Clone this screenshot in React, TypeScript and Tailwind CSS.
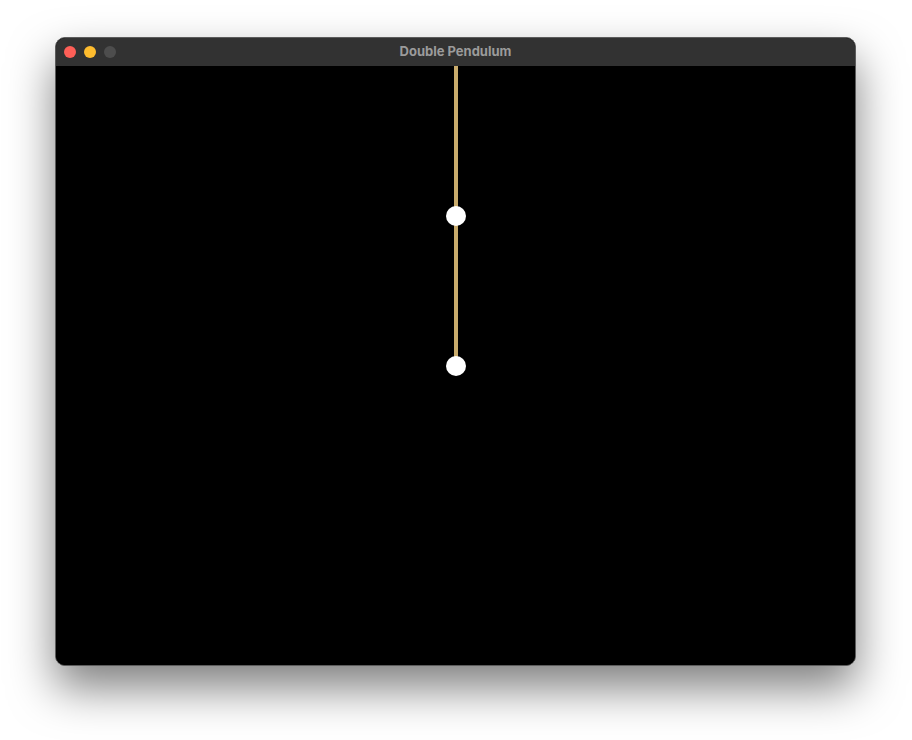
import React from 'react';

// Pendulum geometry in canvas pixels (pivot at top centre)
const PIVOT = { x: 400, y: 0 };
const BOB1 = { x: 400, y: 150 };
const BOB2 = { x: 400, y: 300 };

function TrafficLights() {
  return (
    <div className="absolute left-[8px] top-[8px] flex items-center gap-[8px]">
      <span className="block w-[12px] h-[12px] rounded-full bg-[#fe5f57]" />
      <span className="block w-[12px] h-[12px] rounded-full bg-[#febc2e]" />
      <span className="block w-[12px] h-[12px] rounded-full bg-[#4d4d4d]" />
    </div>
  );
}

function PendulumCanvas() {
  return (
    <svg width="799" height="599" viewBox="0 0 799 599" className="block">
      <rect width="799" height="599" fill="#000" />
      <line x1={PIVOT.x} y1={PIVOT.y} x2={BOB1.x} y2={BOB1.y} stroke="#c9ab6c" strokeWidth="4" />
      <line x1={BOB1.x} y1={BOB1.y} x2={BOB2.x} y2={BOB2.y} stroke="#c9ab6c" strokeWidth="4" />
      <circle cx={BOB1.x} cy={BOB1.y} r="10" fill="#fff" />
      <circle cx={BOB2.x} cy={BOB2.y} r="10" fill="#fff" />
    </svg>
  );
}

export default function App() {
  return (
    <div className="w-[912px] h-[740px] bg-white pt-[37px] pl-[55px]">
      <div className="w-[801px] h-[629px] rounded-[10px] border border-[#5c5c5c] overflow-hidden bg-black shadow-[0_22px_45px_rgba(0,0,0,0.5)]">
        <div className="relative h-[28px] bg-[#323232] flex items-center justify-center">
          <TrafficLights />
          <span className="text-[13px] font-bold text-[#9b9b9b] font-['Inter',sans-serif]">
            Double Pendulum
          </span>
        </div>
        <PendulumCanvas />
      </div>
    </div>
  );
}
